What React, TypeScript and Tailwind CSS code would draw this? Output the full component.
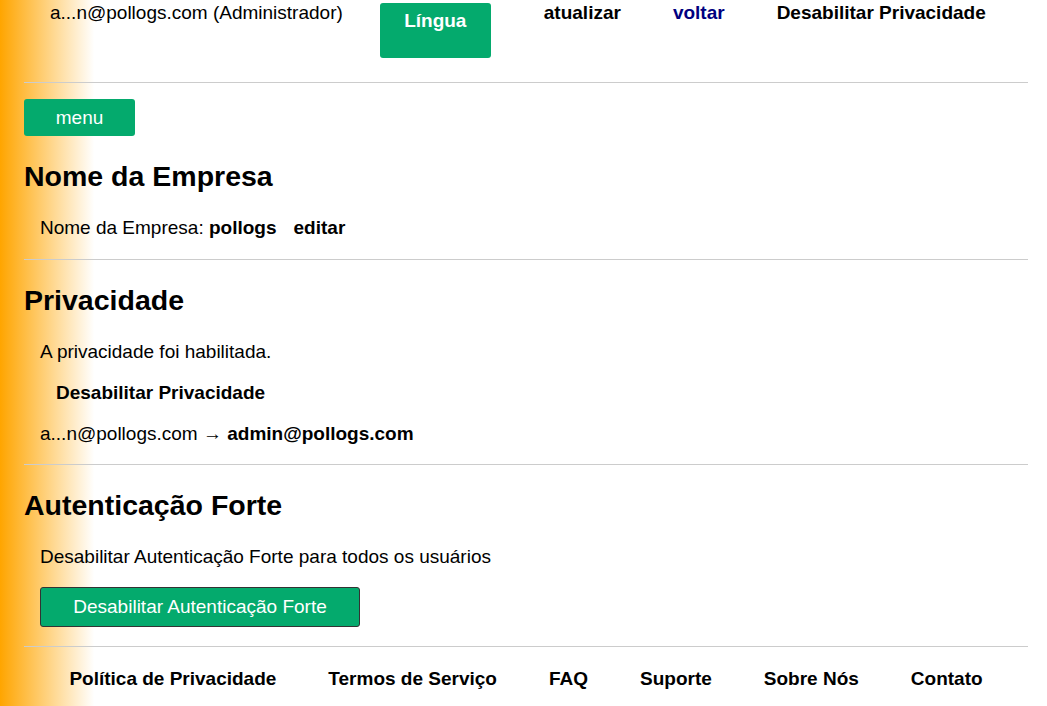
export default function App() {
  const footerLinks = [
    "Política de Privacidade",
    "Termos de Serviço",
    "FAQ",
    "Suporte",
    "Sobre Nós",
    "Contato",
  ];

  return (
    <div
      className="min-h-screen bg-[linear-gradient(90deg,#ffa500_0%,#fff_9%)] text-black text-[19px] leading-[22px]"
      style={{ fontFamily: '"Liberation Sans", Arial, sans-serif' }}
    >
      <div className="ml-[24px] mr-[19px] flex flex-col">
        {/* Header */}
        <div className="flex items-start h-[82px]">
          <span className="ml-[26px] mt-[2px]">a...n@pollogs.com (Administrador)</span>
          <button className="ml-[37px] mt-[3px] w-[111px] h-[55px] pt-[7px] flex justify-center items-start rounded-[3px] bg-[#04aa6d] text-white font-bold">
            Língua
          </button>
          <a className="ml-[53px] mt-[2px] font-bold">atualizar</a>
          <a className="ml-[52px] mt-[2px] font-bold text-[#000080]">voltar</a>
          <a className="ml-[52px] mt-[2px] font-bold">Desabilitar Privacidade</a>
        </div>
        <hr className="border-t border-[#cccccc]" />

        <button className="mt-[16px] w-[111px] h-[37px] rounded-[3px] bg-[#04aa6d] text-white">
          menu
        </button>

        {/* Nome da Empresa */}
        <h2 className="mt-[24px] text-[28.5px] leading-[33px] font-bold">Nome da Empresa</h2>
        <p className="mt-[24px] ml-[16px]">
          Nome da Empresa: <b>pollogs</b>
          <b className="ml-[17px]">editar</b>
        </p>
        <hr className="mt-[20px] border-t border-[#cccccc]" />

        {/* Privacidade */}
        <h2 className="mt-[24px] text-[28.5px] leading-[33px] font-bold">Privacidade</h2>
        <p className="mt-[24px] ml-[16px]">A privacidade foi habilitada.</p>
        <p className="mt-[19px] ml-[32px] font-bold">Desabilitar Privacidade</p>
        <p className="mt-[19px] ml-[16px]">
          a...n@pollogs.com → <b>admin@pollogs.com</b>
        </p>
        <hr className="mt-[19px] border-t border-[#cccccc]" />

        {/* Autenticação Forte */}
        <h2 className="mt-[24px] text-[28.5px] leading-[33px] font-bold">Autenticação Forte</h2>
        <p className="mt-[24px] ml-[16px]">Desabilitar Autenticação Forte para todos os usuários</p>
        <button className="mt-[19px] ml-[16px] w-[320px] h-[40px] rounded-[3px] border border-[#333] bg-[#04aa6d] text-white">
          Desabilitar Autenticação Forte
        </button>
        <hr className="mt-[19px] border-t border-[#cccccc]" />

        {/* Footer */}
        <div className="mt-[21px] flex justify-center gap-[52px] font-bold">
          {footerLinks.map((l) => (
            <a key={l}>{l}</a>
          ))}
        </div>
      </div>
    </div>
  );
}
